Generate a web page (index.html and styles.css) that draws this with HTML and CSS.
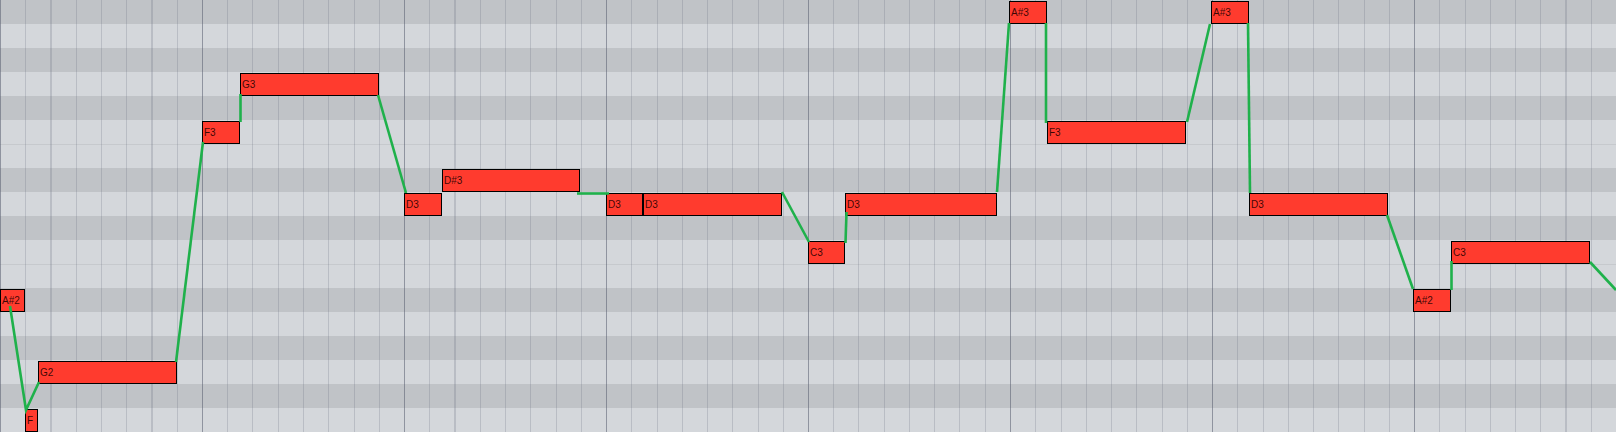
FILE: index.html
```html
<!DOCTYPE html>
<html lang="en">
<head>
    <meta charset="UTF-8">
    <title>Piano Roll</title>
    <link rel="stylesheet" href="styles.css">
</head>
<body>
    <div class="roll">
        <div class="lanes">
            <div class="lane black"></div>  <!-- A#3 -->
            <div class="lane"></div>        <!-- A3 -->
            <div class="lane black"></div>  <!-- G#3 -->
            <div class="lane"></div>        <!-- G3 -->
            <div class="lane black"></div>  <!-- F#3 -->
            <div class="lane"></div>        <!-- F3 -->
            <div class="lane split"></div>  <!-- E3 -->
            <div class="lane black"></div>  <!-- D#3 -->
            <div class="lane"></div>        <!-- D3 -->
            <div class="lane black"></div>  <!-- C#3 -->
            <div class="lane"></div>        <!-- C3 -->
            <div class="lane split"></div>  <!-- B2 -->
            <div class="lane black"></div>  <!-- A#2 -->
            <div class="lane"></div>        <!-- A2 -->
            <div class="lane black"></div>  <!-- G#2 -->
            <div class="lane"></div>        <!-- G2 -->
            <div class="lane black"></div>  <!-- F#2 -->
            <div class="lane"></div>        <!-- F2 -->
        </div>

        <div class="grid"></div>

        <div class="notes">
            <div class="note" style="--x:0px;--w:25px;--row:12">A#2</div>
            <div class="note" style="--x:25px;--w:13px;--row:17">F</div>
            <div class="note" style="--x:38px;--w:139px;--row:15">G2</div>
            <div class="note" style="--x:202px;--w:38px;--row:5">F3</div>
            <div class="note" style="--x:240px;--w:139px;--row:3">G3</div>
            <div class="note" style="--x:404px;--w:38px;--row:8">D3</div>
            <div class="note" style="--x:442px;--w:138px;--row:7">D#3</div>
            <div class="note" style="--x:606px;--w:37px;--row:8">D3</div>
            <div class="note" style="--x:643px;--w:139px;--row:8">D3</div>
            <div class="note" style="--x:808px;--w:37px;--row:10">C3</div>
            <div class="note" style="--x:845px;--w:152px;--row:8">D3</div>
            <div class="note" style="--x:1009px;--w:38px;--row:0">A#3</div>
            <div class="note" style="--x:1047px;--w:139px;--row:5">F3</div>
            <div class="note" style="--x:1211px;--w:38px;--row:0">A#3</div>
            <div class="note" style="--x:1249px;--w:139px;--row:8">D3</div>
            <div class="note" style="--x:1413px;--w:38px;--row:12">A#2</div>
            <div class="note" style="--x:1451px;--w:139px;--row:10">C3</div>
        </div>

        <!-- pitch curve -->
        <svg class="pitch" width="1616" height="432" viewBox="0 0 1616 432">
            <polyline points="10,306 26,410 39,382"/>
            <polyline points="176,362 203,142"/>
            <polyline points="240.5,122 240.5,94"/>
            <polyline points="378,95 406,193"/>
            <polyline points="577,193.5 609,193.5"/>
            <polyline points="782,192 809,242"/>
            <polyline points="845.5,243 846.5,212"/>
            <polyline points="997,192 1009,23"/>
            <polyline points="1046,23 1046,123"/>
            <polyline points="1187,122 1210,24"/>
            <polyline points="1248,23 1250,193"/>
            <polyline points="1387,215 1413,289"/>
            <polyline points="1451.5,290 1451.5,261"/>
            <polyline points="1590,262 1616,290"/>
        </svg>
    </div>
</body>
</html>
```

FILE: styles.css
```css
body {
    margin: 0;
    padding: 0;
    background: #d4d7db;
    font-family: 'Liberation Sans', Arial, sans-serif;
}

.roll {
    width: 1616px;
    height: 432px;
    position: relative;
    overflow: hidden;
}

.lanes {
    display: flex;
    flex-direction: column;
}

.lane {
    height: 24px;
    box-sizing: border-box;
    background: #d4d7db;
}

.lane.black {
    background: #c0c3c7;
}

.lane.split {
    border-top: 1px solid #c6c9cd;
}

/* beat + bar lines */
.grid {
    position: absolute;
    inset: 0;
    pointer-events: none;
    background:
        repeating-linear-gradient(to right,
            rgba(80, 86, 104, 0.4) 0 1px,
            transparent 1px 202px),
        repeating-linear-gradient(to right,
            rgba(100, 106, 124, 0.24) 0 1px,
            transparent 1px 25.25px);
}

.notes {
    position: absolute;
    inset: 0;
}

.note {
    position: absolute;
    left: var(--x);
    top: calc(var(--row) * 24px + 1px);
    width: var(--w);
    height: 23px;
    box-sizing: border-box;
    background: #ff3b2e;
    border: 1px solid #000;
    padding-left: 1px;
    font-size: 10px;
    line-height: 21px;
    color: rgba(30, 0, 0, 0.88);
    white-space: nowrap;
    overflow: hidden;
}

.pitch {
    position: absolute;
    left: 0;
    top: 0;
    pointer-events: none;
}

.pitch polyline {
    fill: none;
    stroke: #1fb14b;
    stroke-width: 2.6;
}
```
